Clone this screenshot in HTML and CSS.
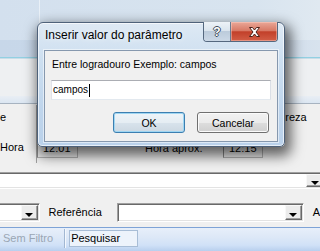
FILE: index.html
```html
<!DOCTYPE html>
<html lang="pt-BR">
<head>
    <meta charset="UTF-8">
    <title>Inserir valor do parâmetro</title>
    <link rel="stylesheet" href="styles.css">
</head>
<body>
    <div class="app">
        <div class="caption">
            <div class="caption-tab"></div>
            <div class="caption-rest"></div>
        </div>
        <div class="caption-band"></div>
        <div class="accent"></div>
        <div class="form-top"></div>
        <div class="tabstrip"></div>

        <div class="fields">
            <div class="label-col">
                <span class="lbl">e</span>
                <span class="lbl lbl-hora">Hora</span>
            </div>
            <div class="field-area">
                <div class="field-row first">
                    <span class="lbl natureza">Natureza</span>
                </div>
                <div class="field-row second">
                    <div class="box box-hora">12:01</div>
                    <span class="lbl aprox">Hora aprox.</span>
                    <div class="box box-aprox">12:15</div>
                </div>
            </div>
        </div>

        <div class="combo combo-wide"><span class="dd"></span></div>

        <div class="filter-row">
            <div class="combo combo-small"><span class="dd"></span></div>
            <span class="lbl ref">Referência</span>
            <div class="combo combo-ref"><span class="dd"></span></div>
            <span class="lbl ate">A</span>
        </div>

        <div class="toolbar">
            <span class="tb-item disabled">Sem Filtro</span>
            <span class="tb-sep"></span>
            <span class="tb-item pressed">Pesquisar</span>
        </div>
    </div>

    <div class="dialog">
        <div class="dlg-title">
            <span class="dlg-caption">Inserir valor do parâmetro</span>
            <div class="cap-buttons">
                <span class="cap-btn help">?</span>
                <span class="cap-btn close">
                    <svg width="13" height="10" viewBox="0 0 13 10">
                        <path d="M1.5 0.5 H4.5 L6.5 3 L8.5 0.5 H11.5 L8 5 L11.5 9.5 H8.5 L6.5 7 L4.5 9.5 H1.5 L5 5 Z" fill="#fff" stroke="#4a2018" stroke-width="1" stroke-linejoin="round"/>
                    </svg>
                </span>
            </div>
        </div>
        <div class="dlg-body">
            <div class="prompt">Entre logradouro Exemplo: campos</div>
            <div class="value-input"><span>campos</span><span class="caret"></span></div>
            <div class="dlg-actions">
                <button class="btn default">OK</button>
                <button class="btn">Cancelar</button>
            </div>
        </div>
    </div>
</body>
</html>
```

FILE: styles.css
```css
body {
    margin: 0;
    width: 320px;
    height: 251px;
    overflow: hidden;
    position: relative;
    background: #f0f0f0;
    font-family: "Liberation Sans", Arial, sans-serif;
    font-size: 11px;
    color: #000;
}
.app {
    display: flex;
    flex-direction: column;
    height: 251px;
}

/* parent window header */
.caption {
    display: flex;
    height: 40px;
    background: linear-gradient(to right, #d3e0ee, #d8e4ef 80%, #e0e9f1);
}
.caption-tab {
    width: 39px;
    border-right: 1px solid #e9f0f7;
}
.caption-rest {
    flex-grow: 1;
}
.caption-band {
    height: 17px;
    background: linear-gradient(to right, #c7d7e9, #ccdaea 80%, #d8e3ee);
}
.accent {
    height: 2px;
    border-top: 1px solid #92d0e2;
    background: #c9dde8;
    box-sizing: border-box;
}
.form-top {
    height: 37px;
    background: #eef0f2;
}
.tabstrip {
    height: 8px;
    box-sizing: border-box;
    background: linear-gradient(#e9eef4, #dbe6f2);
    border-bottom: 1px solid #a7b3c0;
}

/* field grid */
.fields {
    display: flex;
    height: 68px;
}
.lbl {
    line-height: 13px;
    white-space: nowrap;
}
.label-col {
    width: 37px;
    height: 58px;
    margin-top: 1px;
    box-sizing: border-box;
    border-right: 1px solid #a0a0a0;
    padding-top: 6px;
    display: flex;
    flex-direction: column;
}
.lbl-hora {
    margin-top: 17px;
}
.field-area {
    flex-grow: 1;
    padding-top: 7px;
}
.natureza {
    margin-left: 225px;
}
.field-row.second {
    display: flex;
    align-items: center;
    margin-top: 15px;
    height: 19px;
}
.box {
    height: 19px;
    box-sizing: border-box;
    border: 1px solid #b4b4b4;
    border-left-color: #8c8c8c;
    background: #f0f0f0;
    padding-left: 5px;
    line-height: 17px;
}
.box-hora {
    width: 41px;
}
.aprox {
    width: 78px;
    margin-left: 67px;
}
.box-aprox {
    width: 40px;
}

/* combo boxes */
.combo {
    display: flex;
    justify-content: flex-end;
    box-sizing: border-box;
    background: #fff;
    border: 1px solid;
    border-color: #a0a0a0 #fff #fff #a0a0a0;
    box-shadow: inset 1px 1px 0 #696969, inset -1px -1px 0 #e3e3e3;
    padding: 1px;
}
.dd {
    width: 17px;
    box-sizing: border-box;
    background: #ececec;
    border: 1px solid;
    border-color: #f8f8f8 #696969 #696969 #f8f8f8;
    box-shadow: inset -1px -1px 0 #a0a0a0;
    display: flex;
    justify-content: center;
    align-items: center;
}
.dd::after {
    content: "";
    margin-top: 5px;
    border-top: 4px solid #000;
    border-left: 4px solid transparent;
    border-right: 4px solid transparent;
}
.combo-wide {
    height: 17px;
    width: 327px;
    margin-left: -2px;
}
.filter-row {
    display: flex;
    align-items: center;
    height: 19px;
    margin-top: 14px;
}
.combo-small {
    width: 42px;
    height: 19px;
    margin-left: -2px;
}
.ref {
    width: 69px;
    margin-left: 9px;
}
.combo-ref {
    width: 189px;
    height: 19px;
}
.ate {
    margin-left: 9px;
}

/* bottom toolbar */
.toolbar {
    margin-top: 5px;
    height: 24px;
    box-sizing: border-box;
    border-top: 1px solid #7ea3d6;
    background: linear-gradient(#e7effa, #dde8f7 40%, #d0e1f7 75%, #b8cfee);
    display: flex;
    align-items: flex-start;
    padding-left: 3px;
}
.tb-item {
    margin-top: 2px;
    line-height: 15px;
    height: 17px;
    box-sizing: border-box;
    padding-top: 1px;
}
.tb-item.disabled {
    color: #9aa6b4;
}
.tb-sep {
    width: 1px;
    height: 19px;
    margin: 1px 4px 0 11px;
    background: #a2b7d2;
    box-shadow: 1px 0 0 #f4f8fd;
}
.tb-item.pressed {
    width: 69px;
    border: 1px solid #a8bdd6;
    background: #edf3fb;
    padding: 0 0 0 1px;
}

/* dialog */
.dialog {
    position: absolute;
    left: 37px;
    top: 22px;
    width: 248px;
    height: 125px;
    box-sizing: border-box;
    border: 1px solid #4f627a;
    border-radius: 6px 6px 5px 5px;
    background: linear-gradient(#dee9f4, #cddff0 30%, #bfd5ec 70%, #bad1ea);
    box-shadow: 3px 6px 13px 3px rgba(0, 0, 0, 0.6), inset 0 0 0 1px rgba(255, 255, 255, 0.65);
}
.dlg-title {
    display: flex;
    height: 27px;
}
.dlg-caption {
    flex-grow: 1;
    padding: 4px 0 0 7px;
    font-size: 12px;
    line-height: 16px;
    color: #000;
    text-shadow: 0 0 6px #fff;
}
.cap-buttons {
    display: flex;
    margin: -1px 6px 0 0;
    height: 19px;
    border: 1px solid #55687f;
    border-top: none;
    border-radius: 0 0 4px 4px;
    overflow: hidden;
}
.cap-btn {
    display: flex;
    align-items: center;
    justify-content: center;
}
.help {
    width: 26px;
    border-right: 1px solid #6a7b90;
    background: linear-gradient(#edf2f7, #dbe5ee 45%, #bccbdb 50%, #cbd8e6);
    color: #fff;
    font-weight: bold;
    font-size: 12px;
    text-shadow: 1px 0 0 #3f4d5c, -1px 0 0 #3f4d5c, 0 1px 0 #3f4d5c, 0 -1px 0 #3f4d5c;
}
.close {
    width: 46px;
    background: linear-gradient(#eaa898, #d87a66 45%, #c2402a 52%, #d25e46);
    box-shadow: inset 0 0 0 1px rgba(255, 210, 200, 0.45);
}
.dlg-body {
    margin: 0 6px;
    height: 92px;
    box-sizing: border-box;
    border: 1px solid #8698ae;
    background: #f0f0f0;
    box-shadow: 0 0 0 1px rgba(255, 255, 255, 0.5);
    padding: 7px 6px 0;
}
.prompt {
    font-size: 10.5px;
    line-height: 13px;
    padding-left: 1px;
}
.value-input {
    margin-top: 9px;
    height: 20px;
    box-sizing: border-box;
    border: 1px solid;
    border-color: #abadb3 #dbdfe6 #e3e9ef #e2e3ea;
    background: #fff;
    padding-left: 1px;
    font-size: 10px;
    line-height: 18px;
    display: flex;
    align-items: center;
}
.caret {
    width: 1px;
    height: 13px;
    background: #000;
    margin-left: 1px;
}
.dlg-actions {
    display: flex;
    justify-content: flex-end;
    gap: 12px;
    margin-top: 12px;
    padding-right: 2px;
}
.btn {
    width: 72px;
    height: 21px;
    padding: 0;
    border: 1px solid #707070;
    border-radius: 3px;
    background: linear-gradient(#f2f2f2, #ebebeb 50%, #dddddd 51%, #cfcfcf);
    box-shadow: inset 0 0 0 1px #fbfbfb;
    font-family: "Liberation Sans", Arial, sans-serif;
    font-size: 10.5px;
    color: #000;
}
.btn.default {
    border-color: #3c7fb1;
    background: linear-gradient(#eef4f8, #e5edf3 50%, #d8e3ec 51%, #ccd8e2);
    box-shadow: inset 0 0 0 1px #9fd6f2;
}
```
